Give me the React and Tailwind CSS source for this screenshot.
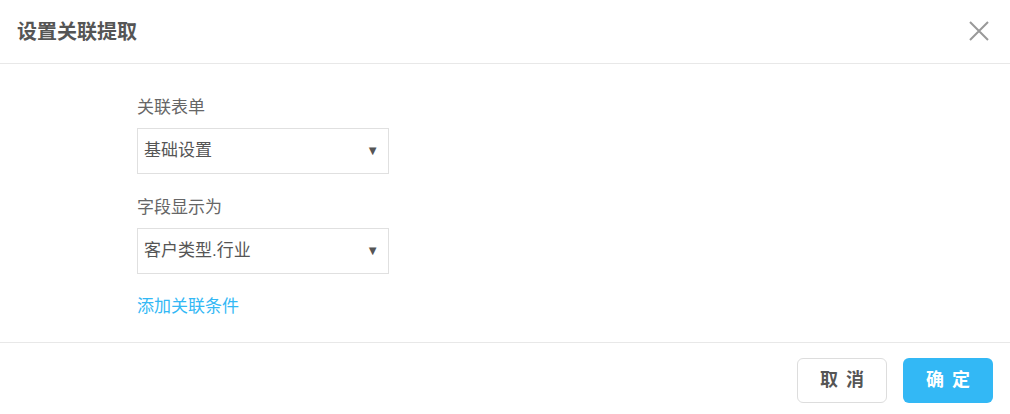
const font = { fontFamily: '"Liberation Sans", "Noto Sans CJK SC", sans-serif' };

// Select-like field with a small triangle on the right
const Field = ({ label, value }) => (
  <div className="flex flex-col">
    <div className="text-[17px] leading-[22px] text-[#666]">{label}</div>
    <div className="mt-[9px] flex h-[46px] w-[252px] items-center justify-between border border-[#e0e0e0] pl-[6px] pr-[9px]">
      <span className="text-[17px] text-[#555]">{value}</span>
      <span className="text-[13px] text-[#555]">▼</span>
    </div>
  </div>
);

export default function App() {
  return (
    <div className="flex h-[414px] w-[1010px] flex-col bg-white" style={font}>
      <div className="flex h-[64px] items-center justify-between border-b border-[#e8e8e8] pl-[17px] pr-[21px]">
        <span className="text-[20px] font-bold text-[#555]">设置关联提取</span>
        <svg width="20" height="20" viewBox="0 0 20 20" className="-mt-[1px]">
          <path d="M1 1 L19 19 M19 1 L1 19" stroke="#999" strokeWidth="2" fill="none" />
        </svg>
      </div>
      <div className="flex h-[279px] flex-col gap-[23px] border-b border-[#e8e8e8] pl-[137px] pt-[33px]">
        <Field label="关联表单" value="基础设置" />
        <Field label="字段显示为" value="客户类型.行业" />
        <div className="-mt-[1px] text-[17px] leading-[22px] text-[#33b8f5]">添加关联条件</div>
      </div>
      <div className="flex justify-end gap-[16px] pr-[17px] pt-[15px]">
        <button className="h-[45px] w-[90px] rounded-[6px] border border-[#ddd] bg-white pl-[8px] text-[18px] font-bold tracking-[8px] text-[#555]">
          取消
        </button>
        <button className="h-[45px] w-[90px] rounded-[6px] bg-[#33b8f5] pl-[8px] text-[18px] font-bold tracking-[8px] text-white">
          确定
        </button>
      </div>
    </div>
  );
}
